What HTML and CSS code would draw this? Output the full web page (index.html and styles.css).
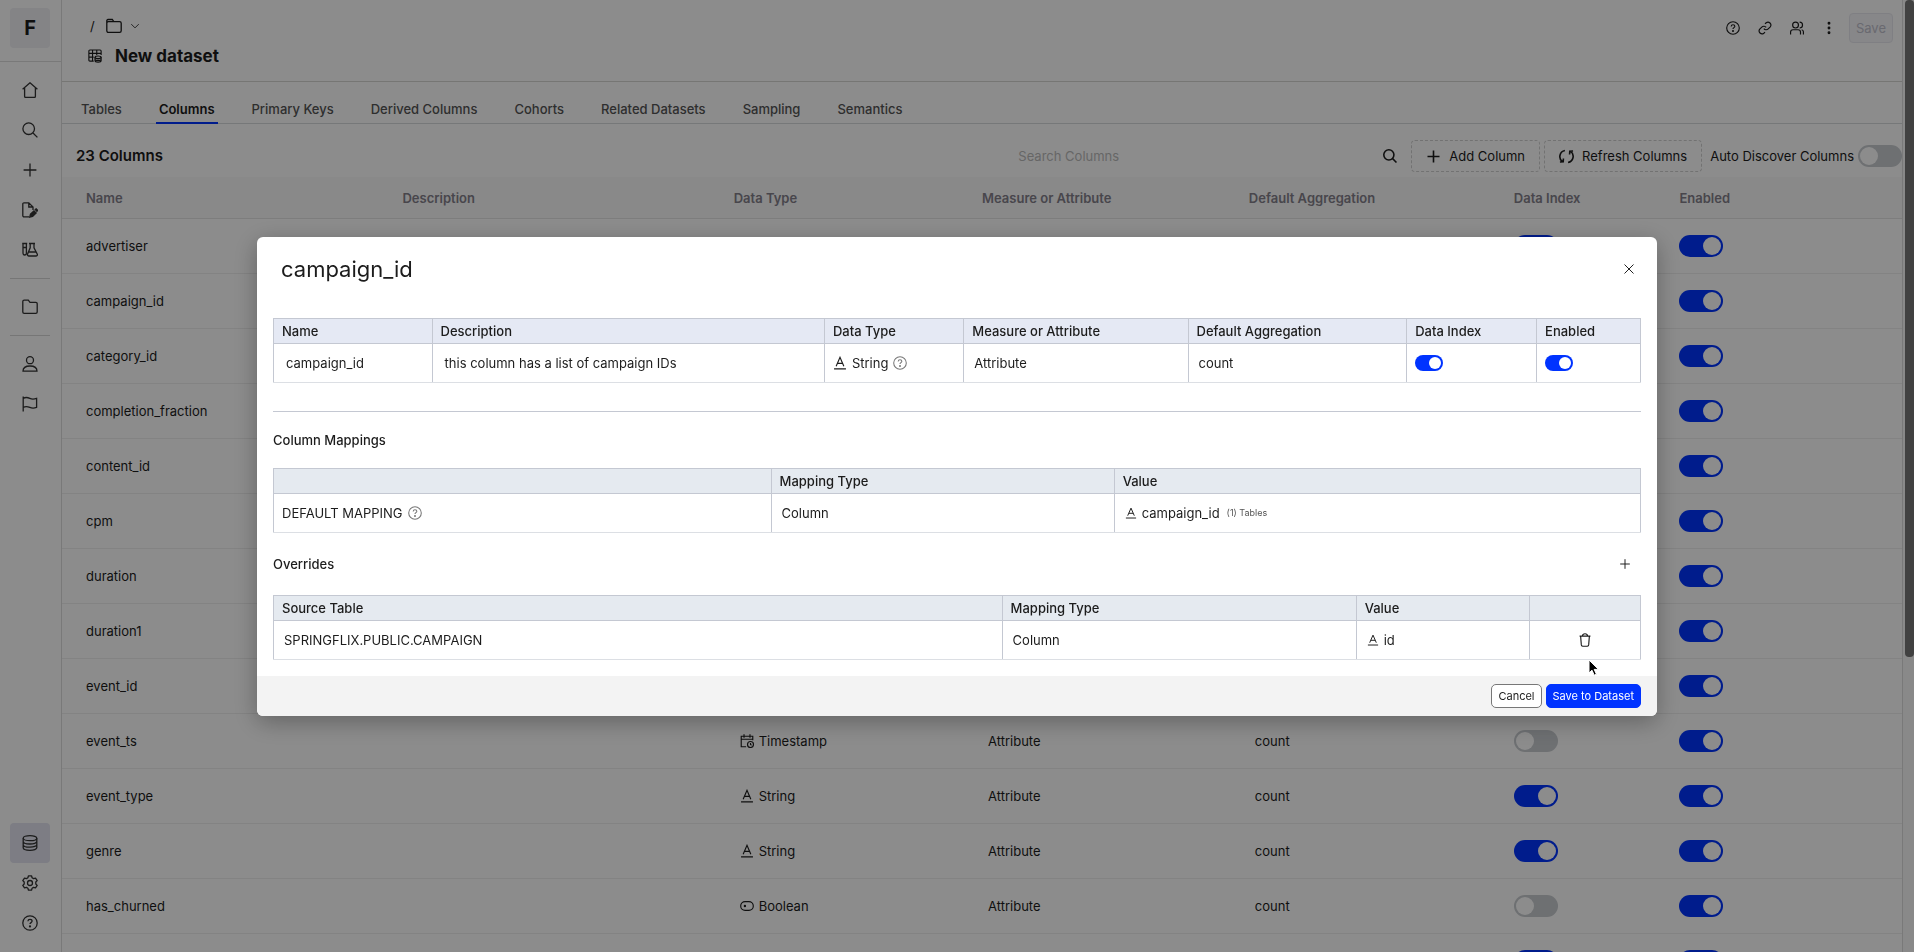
FILE: index.html
```html
<!DOCTYPE html>
<html lang="en">
<head>
<meta charset="UTF-8">
<title>New dataset</title>
<link rel="stylesheet" href="styles.css">
</head>
<body>

<!-- Icons -->
<svg class="sprite" aria-hidden="true">
    <symbol id="i-home" viewBox="0 0 16 16"><path d="M.6 7.200 8 .8l7.400 6.400M2.600 5.600v8.600c0 .8.5 1.300 1.300 1.300h8.200c.8 0 1.300-.5 1.300-1.300V5.600"/></symbol>
    <symbol id="i-search" viewBox="0 0 16 16"><circle cx="6.700" cy="6.700" r="5.800"/><path d="m11 11 4.400 4.400"/></symbol>
    <symbol id="i-plus" viewBox="0 0 16 16"><path d="M8 1.600v12.800M1.600 8h12.800"/></symbol>
    <symbol id="i-doc" viewBox="0 0 16 16"><path d="M7 14.800H2c-.7 0-1.200-.5-1.200-1.200V2c0-.7.5-1.200 1.200-1.200h4.800L11 5v3M6.800.8V5H11"/><path class="fill" d="m7.800 15 .7-2.800 3.500-3.400 2.100 2.100-3.500 3.400zM13.300 7.600l.9-.8 1.600 1.600-.9.900z"/></symbol>
    <symbol id="i-flask" viewBox="0 0 16 16"><path d="M.2 1.500h5M1 1.500v9.800a1.700 1.700 0 0 0 3.400 0V1.500M1 5.500h3.400M7 1.500h6M8.200 1.500v4.300L5.600 12c-.4 1.200.2 2 1.300 2h7c1.200 0 1.800-.9 1.300-2l-3.200-6.200V1.500M6.600 10h7.400"/></symbol>
    <symbol id="i-folder" viewBox="0 0 16 16"><path d="M.8 3V13c0 .8.600 1.400 1.400 1.400h11.600c.8 0 1.400-.6 1.400-1.400V4.700c0-.8-.6-1.400-1.400-1.400H8L6.300 1.200H2.200C1.400 1.200.8 1.800.8 2.600z"/></symbol>
    <symbol id="i-folder-tab" viewBox="0 0 16 16"><path d="M.8 12.600V2.700c0-.7.500-1.200 1.200-1.200h4.300l1.500 2.200h5.800c.9 0 1.600.6 1.600 1.500v7.600c0 .9-.7 1.600-1.600 1.600H2.400c-.9 0-1.600-.7-1.600-1.600V5.300c0-.9.700-1.600 1.600-1.600h5.400"/></symbol>
    <symbol id="i-user" viewBox="0 0 16 16"><circle cx="8" cy="4.200" r="3.500"/><path d="M1 15.200c0-3.600 2.600-5.200 7-5.200s7 1.600 7 5.200z"/></symbol>
    <symbol id="i-flag" viewBox="0 0 16 16"><path d="M1.200.6v15M1.200 2.400c2.500-1.500 4.400-1.100 6.600 0s4.200 1 6.800 0v9c-2.600 1-4.600 1-6.800 0s-4.100-1.500-6.600 0"/></symbol>
    <symbol id="i-db" viewBox="0 0 16 16"><ellipse cx="8" cy="3.200" rx="6.800" ry="2.500"/><path d="M1.200 3.200v9.600c0 1.400 3 2.500 6.800 2.500s6.800-1.100 6.800-2.500V3.200M1.200 6.500C1.200 7.900 4.200 9 8 9s6.800-1.100 6.800-2.500M1.200 9.700c0 1.400 3 2.500 6.800 2.500s6.800-1.100 6.800-2.500"/></symbol>
    <symbol id="i-gear" viewBox="0 0 16 16"><circle cx="8" cy="8" r="2.500"/><path stroke-linejoin="round" d="M6.500.8h3l.6 2 1.400.8 2-.5 1.700 2.500L13.800 7v2l1.400 1.400-1.700 2.500-2-.5-1.400.8-.6 2h-3l-.6-2-1.400-.8-2 .5L.8 10.400 2.200 9V7L.8 5.600l1.700-2.500 2 .5 1.400-.8z"/></symbol>
    <symbol id="i-help" viewBox="0 0 16 16"><circle cx="8" cy="8" r="7.200"/><path d="M5.900 6.200c.1-1.200 1-1.900 2.100-1.900 1.200 0 2.100.7 2.100 1.800 0 1.500-2.100 1.500-2.100 3"/><circle class="fill" cx="8" cy="11.400" r=".5"/></symbol>
    <symbol id="i-chevron" viewBox="0 0 16 16"><path d="m2 5 6 6 6-6"/></symbol>
    <symbol id="i-dataset" viewBox="0 0 16 16"><path d="M6.500 13.800H2.200c-.7 0-1.200-.5-1.200-1.200V2.400c0-.7.5-1.200 1.200-1.200h11.600c.7 0 1.200.5 1.200 1.200v4.400M1 5h14M1 9.300h5.500M5.200 1.200v12.600M10 1.200v5.600"/><ellipse cx="11.500" cy="9.500" rx="3.500" ry="1.500"/><path d="M8 9.500v4c0 .8 1.600 1.500 3.500 1.500s3.500-.7 3.500-1.500v-4M8 11.600c0 .8 1.600 1.400 3.500 1.400s3.500-.6 3.500-1.400"/></symbol>
    <symbol id="i-link" viewBox="0 0 24 24"><path stroke-width="2" d="M10 13a5 5 0 0 0 7.500.5l3.500-3.500a5 5 0 0 0-7-7l-2 2M14 11a5 5 0 0 0-7.500-.5L3 14a5 5 0 0 0 7 7l2-2"/></symbol>
    <symbol id="i-users" viewBox="0 0 24 24"><g stroke-width="2"><circle cx="9.500" cy="7" r="5"/><path d="M1 23v-4a4 4 0 0 1 4-4h9a4 4 0 0 1 4 4v4M16.500 2a5 5 0 0 1 0 10M20 15a4 4 0 0 1 3 4v4"/></g></symbol>
    <symbol id="i-dots" viewBox="0 0 16 16"><circle class="fill" cx="8" cy="2.500" r="1"/><circle class="fill" cx="8" cy="8" r="1"/><circle class="fill" cx="8" cy="13.500" r="1"/></symbol>
    <symbol id="i-refresh" viewBox="0 0 16 16"><path d="M6.300 1.600A6.600 6.600 0 0 0 3.600 13.400M1 13.800l3.500-.2.200-3.500M9.700 14.400A6.600 6.600 0 0 0 12.400 2.600M15 2.200l-3.500.2-.2 3.500"/></symbol>
    <symbol id="i-string" viewBox="0 0 16 16"><path d="M3.600 11.600 8 1.500l4.400 10.100M5.200 8.400h5.600M1.200 14.700h13.600"/></symbol>
    <symbol id="i-time" viewBox="0 0 16 16"><path d="M7 14.600H1.400V2.600h13.200V7M1.400 6h13.200M4.600.4v4M11.400.4v4"/><circle cx="12" cy="12" r="3.400"/><path d="M12 10.200V12l1.200.8"/></symbol>
    <symbol id="i-bool" viewBox="0 0 16 16"><rect x=".8" y="3" width="14.400" height="10" rx="5"/><circle class="fill" cx="5.600" cy="8" r=".7"/></symbol>
    <symbol id="i-close" viewBox="0 0 16 16"><path d="m2 2 12 12M14 2 2 14"/></symbol>
    <symbol id="i-trash" viewBox="0 0 16 16"><path d="M1.800 3.600h12.400M5 3.400C5.200 1.700 6.300.9 8 .9s2.800.8 3 2.500M3 3.600l.8 10c.1.900.6 1.500 1.500 1.500h5.400c.9 0 1.400-.6 1.500-1.500l.8-10"/></symbol>
</svg>

<div class="app">
    <nav class="sidebar">
        <div class="brand"><a href="#" class="logo">F</a></div>
        <div class="nav-group">
            <a href="#" class="nav-item" aria-label="Home"><svg class="icon"><use href="#i-home"/></svg></a>
            <a href="#" class="nav-item" aria-label="Search"><svg class="icon"><use href="#i-search"/></svg></a>
            <a href="#" class="nav-item" aria-label="Create"><svg class="icon"><use href="#i-plus"/></svg></a>
            <a href="#" class="nav-item" aria-label="Drafts"><svg class="icon"><use href="#i-doc"/></svg></a>
            <a href="#" class="nav-item" aria-label="Experiments"><svg class="icon"><use href="#i-flask"/></svg></a>
        </div>
        <div class="nav-group">
            <a href="#" class="nav-item" aria-label="Files"><svg class="icon"><use href="#i-folder"/></svg></a>
        </div>
        <div class="nav-group">
            <a href="#" class="nav-item" aria-label="People"><svg class="icon"><use href="#i-user"/></svg></a>
            <a href="#" class="nav-item" aria-label="Flags"><svg class="icon"><use href="#i-flag"/></svg></a>
        </div>
        <div class="nav-bottom">
            <a href="#" class="nav-item active" aria-label="Data"><svg class="icon"><use href="#i-db"/></svg></a>
            <a href="#" class="nav-item" aria-label="Settings"><svg class="icon"><use href="#i-gear"/></svg></a>
            <a href="#" class="nav-item" aria-label="Help"><svg class="icon"><use href="#i-help"/></svg></a>
        </div>
    </nav>

    <main class="main">
        <header class="header">
            <div class="header-left">
                <div class="breadcrumb">
                    <span>/</span>
                    <svg class="icon"><use href="#i-folder-tab"/></svg>
                    <svg class="icon small"><use href="#i-chevron"/></svg>
                </div>
                <div class="title-row">
                    <svg class="icon"><use href="#i-dataset"/></svg>
                    <h1>New dataset</h1>
                </div>
            </div>
            <div class="header-actions">
                <button class="icon-button" aria-label="Help"><svg class="icon"><use href="#i-help"/></svg></button>
                <button class="icon-button" aria-label="Copy link"><svg class="icon"><use href="#i-link"/></svg></button>
                <button class="icon-button" aria-label="Share"><svg class="icon"><use href="#i-users"/></svg></button>
                <button class="icon-button" aria-label="More"><svg class="icon"><use href="#i-dots"/></svg></button>
                <button class="save-button" disabled>Save</button>
            </div>
        </header>

        <div class="tabs">
            <a href="#" class="tab">Tables</a>
            <a href="#" class="tab selected">Columns</a>
            <a href="#" class="tab">Primary Keys</a>
            <a href="#" class="tab">Derived Columns</a>
            <a href="#" class="tab">Cohorts</a>
            <a href="#" class="tab">Related Datasets</a>
            <a href="#" class="tab">Sampling</a>
            <a href="#" class="tab">Semantics</a>
        </div>

        <div class="toolbar">
            <h2>23 Columns</h2>
            <div class="search">
                <input type="text" placeholder="Search Columns" aria-label="Search Columns">
                <svg class="icon"><use href="#i-search"/></svg>
            </div>
            <button class="dashed-button"><svg class="icon"><use href="#i-plus"/></svg>Add Column</button>
            <button class="dashed-button"><svg class="icon"><use href="#i-refresh"/></svg>Refresh Columns</button>
            <label class="discover">Auto Discover Columns <input type="checkbox" class="toggle"></label>
        </div>

        <table class="columns-table">
            <thead>
                <tr>
                    <th class="c-name">Name</th>
                    <th class="c-desc">Description</th>
                    <th class="c-type">Data Type</th>
                    <th class="c-measure">Measure or Attribute</th>
                    <th class="c-agg">Default Aggregation</th>
                    <th class="c-index">Data Index</th>
                    <th>Enabled</th>
                </tr>
            </thead>
            <tbody>
                <tr><td>advertiser</td><td></td><td></td><td></td><td></td><td><input type="checkbox" class="toggle" aria-label="Data Index" checked></td><td><input type="checkbox" class="toggle" aria-label="Enabled" checked></td></tr>
                <tr><td>campaign_id</td><td></td><td></td><td></td><td></td><td></td><td><input type="checkbox" class="toggle" aria-label="Enabled" checked></td></tr>
                <tr><td>category_id</td><td></td><td></td><td></td><td></td><td></td><td><input type="checkbox" class="toggle" aria-label="Enabled" checked></td></tr>
                <tr><td>completion_fraction</td><td></td><td></td><td></td><td></td><td></td><td><input type="checkbox" class="toggle" aria-label="Enabled" checked></td></tr>
                <tr><td>content_id</td><td></td><td></td><td></td><td></td><td></td><td><input type="checkbox" class="toggle" aria-label="Enabled" checked></td></tr>
                <tr><td>cpm</td><td></td><td></td><td></td><td></td><td></td><td><input type="checkbox" class="toggle" aria-label="Enabled" checked></td></tr>
                <tr><td>duration</td><td></td><td></td><td></td><td></td><td></td><td><input type="checkbox" class="toggle" aria-label="Enabled" checked></td></tr>
                <tr><td>duration1</td><td></td><td></td><td></td><td></td><td></td><td><input type="checkbox" class="toggle" aria-label="Enabled" checked></td></tr>
                <tr><td>event_id</td><td></td><td></td><td></td><td></td><td></td><td><input type="checkbox" class="toggle" aria-label="Enabled" checked></td></tr>
                <tr>
                    <td>event_ts</td>
                    <td></td>
                    <td class="inset"><span class="type"><svg class="icon"><use href="#i-time"/></svg>Timestamp</span></td>
                    <td class="inset">Attribute</td>
                    <td class="inset">count</td>
                    <td><input type="checkbox" class="toggle" aria-label="Data Index"></td>
                    <td><input type="checkbox" class="toggle" aria-label="Enabled" checked></td>
                </tr>
                <tr>
                    <td>event_type</td>
                    <td></td>
                    <td class="inset"><span class="type"><svg class="icon"><use href="#i-string"/></svg>String</span></td>
                    <td class="inset">Attribute</td>
                    <td class="inset">count</td>
                    <td><input type="checkbox" class="toggle" aria-label="Data Index" checked></td>
                    <td><input type="checkbox" class="toggle" aria-label="Enabled" checked></td>
                </tr>
                <tr>
                    <td>genre</td>
                    <td></td>
                    <td class="inset"><span class="type"><svg class="icon"><use href="#i-string"/></svg>String</span></td>
                    <td class="inset">Attribute</td>
                    <td class="inset">count</td>
                    <td><input type="checkbox" class="toggle" aria-label="Data Index" checked></td>
                    <td><input type="checkbox" class="toggle" aria-label="Enabled" checked></td>
                </tr>
                <tr>
                    <td>has_churned</td>
                    <td></td>
                    <td class="inset"><span class="type"><svg class="icon"><use href="#i-bool"/></svg>Boolean</span></td>
                    <td class="inset">Attribute</td>
                    <td class="inset">count</td>
                    <td><input type="checkbox" class="toggle" aria-label="Data Index"></td>
                    <td><input type="checkbox" class="toggle" aria-label="Enabled" checked></td>
                </tr>
                <tr><td></td><td></td><td></td><td></td><td></td><td><input type="checkbox" class="toggle" aria-label="Data Index" checked></td><td><input type="checkbox" class="toggle" aria-label="Enabled" checked></td></tr>
            </tbody>
        </table>
    </main>

    <div class="scroll-track"><div class="scroll-thumb"></div></div>
</div>

<!-- Edit column modal -->
<div class="overlay">
    <div class="modal" role="dialog" aria-labelledby="modalTitle">
        <div class="modal-header">
            <h2 id="modalTitle">campaign_id</h2>
            <button class="icon-button" aria-label="Close"><svg class="icon tiny"><use href="#i-close"/></svg></button>
        </div>

        <div class="modal-body">
            <table class="grid column-info">
                <thead>
                    <tr>
                        <th class="g-name">Name</th>
                        <th class="g-desc">Description</th>
                        <th class="g-type">Data Type</th>
                        <th class="g-measure">Measure or Attribute</th>
                        <th class="g-agg">Default Aggregation</th>
                        <th class="g-index">Data Index</th>
                        <th>Enabled</th>
                    </tr>
                </thead>
                <tbody>
                    <tr>
                        <td class="wide">campaign_id</td>
                        <td class="wide">this column has a list of campaign IDs</td>
                        <td><span class="type"><svg class="icon"><use href="#i-string"/></svg>String <svg class="icon hint"><use href="#i-help"/></svg></span></td>
                        <td class="mid">Attribute</td>
                        <td class="mid">count</td>
                        <td><input type="checkbox" class="toggle compact" aria-label="Data Index" checked></td>
                        <td><input type="checkbox" class="toggle compact" aria-label="Enabled" checked></td>
                    </tr>
                </tbody>
            </table>

            <hr>

            <h3>Column Mappings</h3>
            <table class="grid">
                <thead>
                    <tr><th class="m-source"></th><th class="m-type">Mapping Type</th><th>Value</th></tr>
                </thead>
                <tbody>
                    <tr>
                        <td><span class="type">DEFAULT MAPPING <svg class="icon hint"><use href="#i-help"/></svg></span></td>
                        <td class="mid">Column</td>
                        <td class="mid"><span class="type tight"><svg class="icon"><use href="#i-string"/></svg>campaign_id <small>(1) Tables</small></span></td>
                    </tr>
                </tbody>
            </table>

            <div class="section-row">
                <h3>Overrides</h3>
                <button class="icon-button" aria-label="Add override"><svg class="icon tiny"><use href="#i-plus"/></svg></button>
            </div>
            <table class="grid">
                <thead>
                    <tr><th class="o-source">Source Table</th><th class="o-type">Mapping Type</th><th class="o-value">Value</th><th></th></tr>
                </thead>
                <tbody>
                    <tr>
                        <td class="mid">SPRINGFLIX.PUBLIC.CAMPAIGN</td>
                        <td class="mid">Column</td>
                        <td class="mid"><span class="type tight"><svg class="icon"><use href="#i-string"/></svg>id</span></td>
                        <td class="remove">
                            <button class="icon-button" aria-label="Remove override"><svg class="icon"><use href="#i-trash"/></svg></button>
                            <svg class="pointer" viewBox="0 0 12 18"><path d="M1 1v13l3-2.800 2.200 5 2.200-1-2.200-4.800H10.500z"/></svg>
                        </td>
                    </tr>
                </tbody>
            </table>
        </div>

        <div class="modal-footer">
            <button class="button">Cancel</button>
            <button class="button primary">Save to Dataset</button>
        </div>
    </div>
</div>

</body>
</html>
```
FILE: styles.css
```css
* {
    box-sizing: border-box;
}

body {
    margin: 0;
    height: 100vh;
    overflow: hidden;
    background: #fff;
    color: #1c1c1c;
    font-family: 'Inter', 'Liberation Sans', sans-serif;
    font-size: 13px;
    line-height: 20px;
}

h1, h2, h3 {
    margin: 0;
}

a {
    color: inherit;
    text-decoration: none;
}

button, input {
    font: inherit;
    color: inherit;
}

.sprite {
    display: none;
}

.icon {
    display: block;
    flex: none;
    width: 14px;
    height: 14px;
    fill: none;
    stroke: currentColor;
    stroke-width: 1.3;
}

.icon.small {
    width: 12px;
    height: 12px;
}

.icon.tiny {
    width: 12px;
    height: 12px;
}

.fill {
    fill: currentColor;
}

.icon-button {
    display: flex;
    align-items: center;
    justify-content: center;
    width: 24px;
    height: 24px;
    padding: 0;
    border: none;
    background: none;
    cursor: pointer;
}

.app {
    display: flex;
    height: 100vh;
    overflow: hidden;
}

/* Sidebar */
.sidebar {
    display: flex;
    flex-direction: column;
    flex: none;
    width: 62px;
    border-right: 1px solid #dcdcdc;
}

.brand {
    width: 100%;
    padding: 8px 0 13px 10px;
    border-bottom: 1px solid #dcdcdc;
}

.logo {
    display: flex;
    align-items: center;
    justify-content: center;
    width: 40px;
    height: 40px;
    border-radius: 4px;
    background: #f0f0f5;
    font-size: 20px;
    font-weight: 700;
}

.nav-group {
    width: 40px;
    margin-left: 10px;
    padding: 8px 0;
}

.nav-group + .nav-group {
    border-top: 1px solid #d8d8d8;
}

.nav-item {
    display: flex;
    align-items: center;
    justify-content: center;
    width: 40px;
    height: 40px;
    border-radius: 4px;
    color: #333;
}

.nav-item .icon {
    width: 16px;
    height: 16px;
}

.nav-item.active {
    background: #e3e4f0;
}

.nav-bottom {
    margin-top: auto;
    margin-left: 10px;
    padding-bottom: 9px;
}

/* Page header */
.main {
    flex: 1;
    min-width: 0;
    border-right: 1px solid #dcdcdc;
}

.header {
    display: flex;
    justify-content: space-between;
    align-items: flex-start;
    height: 82px;
    padding: 13px 9px 0 26px;
    border-bottom: 1px solid #d8d8d4;
}

.breadcrumb {
    display: flex;
    align-items: center;
    gap: 8px;
    height: 25px;
    padding-left: 2px;
}

.breadcrumb span {
    width: 8px;
}

.breadcrumb .icon:not(.small) {
    width: 16px;
    height: 16px;
}

.breadcrumb .icon.small {
    width: 10px;
}

.title-row {
    display: flex;
    align-items: center;
    gap: 13px;
    height: 35px;
}

h1 {
    font-size: 17px;
    font-weight: 700;
}

.header-actions {
    display: flex;
    align-items: center;
    gap: 8px;
}

.save-button {
    height: 30px;
    padding: 0 6px;
    border: 1px solid #e8e8ee;
    border-radius: 4px;
    background: #f6f6fa;
    color: #c0c0cc;
    font-size: 13px;
}

.tabs {
    display: flex;
    gap: 31px;
    height: 42px;
    padding: 0 16px;
    border-bottom: 1px solid #d8dadc;
}

.tab {
    height: 42px;
    padding: 17px 3px 0;
    color: #555;
    font-weight: 500;
}

.tab.selected {
    border-bottom: 2px solid #0033ff;
    color: #1c1c1c;
    font-weight: 600;
}

/* Toolbar */
.toolbar {
    display: flex;
    align-items: center;
    gap: 4px;
    height: 53px;
    padding: 11px 0 0 14px;
}

.toolbar h2 {
    flex: 1;
    font-size: 15px;
    font-weight: 600;
}

.search {
    display: flex;
    align-items: center;
    width: 389px;
    padding-right: 10px;
}

.search input {
    flex: 1;
    padding: 0;
    border: none;
    outline: none;
    background: none;
}

.search input::placeholder {
    color: #bbb;
}

.search .icon {
    stroke-width: 1.8;
}

.dashed-button {
    display: flex;
    align-items: center;
    gap: 8px;
    height: 32px;
    padding: 0 14px;
    border: 1px dashed #d0d0d0;
    border-radius: 4px;
    background: none;
}

.dashed-button .icon {
    width: 15px;
    height: 15px;
    stroke-width: 1.7;
}

.discover {
    display: flex;
    align-items: center;
    gap: 4px;
    padding-left: 4px;
}

.toggle {
    display: block;
    appearance: none;
    width: 44px;
    height: 22px;
    margin: 0;
    padding: 2px;
    border-radius: 11px;
    background: #c8ccd0;
    cursor: pointer;
}

.toggle::before {
    content: '';
    display: block;
    width: 18px;
    height: 18px;
    border-radius: 50%;
    background: #fff;
}

.toggle:checked {
    background: #0033ff;
}

.toggle:checked::before {
    margin-left: auto;
}

.toggle.compact {
    width: 28px;
    height: 16px;
}

.toggle.compact::before {
    width: 12px;
    height: 12px;
}

/* Columns table */
.columns-table {
    width: 100%;
    table-layout: fixed;
    border-collapse: collapse;
}

.columns-table th {
    height: 41px;
    padding: 2px 0 0 24px;
    border-bottom: 1px solid #e4e4e4;
    background: #f9f9fa;
    color: #84808a;
    font-weight: 600;
    text-align: left;
}

.columns-table td {
    height: 55px;
    padding: 0 0 0 24px;
    border-bottom: 1px solid #eee;
}

.columns-table td.inset {
    padding-left: 30px;
}

.c-name { width: 17.2%; }
.c-desc { width: 18%; }
.c-type { width: 13.5%; }
.c-measure { width: 14.5%; }
.c-agg { width: 14.4%; }
.c-index { width: 9%; }

.type {
    display: flex;
    align-items: center;
    gap: 5px;
}

/* Page scrollbar */
.scroll-track {
    flex: none;
    width: 11px;
    padding-left: 2px;
    background: #fafafa;
}

.scroll-thumb {
    height: 69%;
    border-radius: 4px;
    background: #777;
}

/* Modal */
.overlay {
    position: fixed;
    inset: 0;
    display: flex;
    align-items: center;
    justify-content: center;
    background: rgba(0, 0, 0, 0.45);
}

.modal {
    width: 90%;
    max-width: 1400px;
    border-radius: 6px;
    background: #fff;
    box-shadow: 0 6px 24px rgba(0, 0, 0, 0.3);
    overflow: hidden;
}

.modal-header {
    display: flex;
    align-items: center;
    justify-content: space-between;
    height: 65px;
    padding: 0 16px 0 24px;
}

.modal-header h2 {
    font-size: 22px;
    font-weight: 400;
}

.modal-body {
    padding: 16px;
}

.modal h3 {
    font-size: 13px;
    font-weight: 500;
}

hr {
    margin: 28px 0 18px;
    border: none;
    border-top: 1px solid #c4c8d2;
}

.grid {
    width: 100%;
    table-layout: fixed;
    border-collapse: collapse;
}

h3 + .grid {
    margin-top: 18px;
}

.grid th,
.grid td {
    border: 1px solid #c4c8d2;
    text-align: left;
}

.grid th {
    height: 25px;
    padding: 0 8px;
    background: #e5eaf0;
    font-weight: 500;
}

.grid.column-info th {
    background: #e5e9f4;
}

.grid td {
    height: 39px;
    padding: 0 8px;
    border-bottom-color: #dcdfe4;
}

.grid td.mid {
    padding-left: 10px;
}

.grid td.wide {
    padding-left: 12px;
}

.type.tight .icon {
    width: 12px;
    height: 12px;
}

.icon.hint {
    color: #777;
    stroke-width: 1.2;
}

small {
    margin-left: 2px;
    color: #555;
    font-size: 9px;
}

.g-name { width: 11.6%; }
.g-desc { width: 28.7%; }
.g-type { width: 10.2%; }
.g-measure { width: 16.4%; }
.g-agg { width: 16%; }
.g-index { width: 9.5%; }

.m-source { width: 36.4%; }
.m-type { width: 25.1%; }

.o-source { width: 53.3%; }
.o-type { width: 25.9%; }
.o-value { width: 12.7%; }

.section-row {
    display: flex;
    align-items: center;
    justify-content: space-between;
    height: 62px;
    padding-right: 4px;
}

.remove .icon-button {
    margin: 0 auto;
}

.grid td.remove {
    position: relative;
}

/* mouse pointer resting under the trash icon */
.pointer {
    position: absolute;
    top: 38px;
    left: 50%;
    width: 12px;
    height: 18px;
    margin-left: 3px;
    fill: #000;
    stroke: #fff;
}

.modal-footer {
    display: flex;
    align-items: center;
    justify-content: flex-end;
    gap: 4px;
    height: 40px;
    padding: 0 16px;
    background: #f3f3f3;
}

.button {
    height: 24px;
    padding: 0 6px;
    border: 1px solid #777;
    border-radius: 5px;
    background: #fff;
    font-size: 11px;
}

.button.primary {
    border-color: #0033ff;
    background: #0033ff;
    color: #fff;
}
```
